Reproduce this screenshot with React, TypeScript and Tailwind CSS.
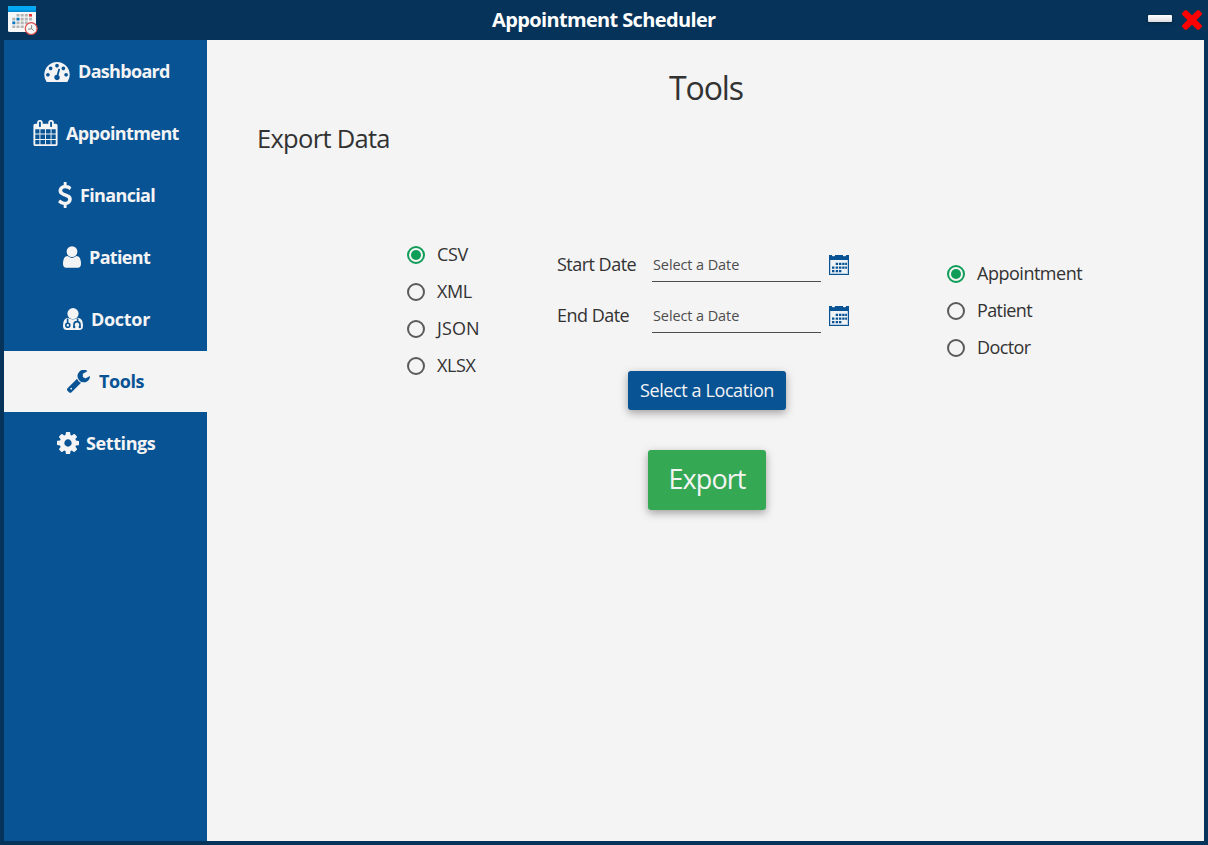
import React from 'react';

const paths = {
  gauge:
    'M384 1152q0-53-37.5-90.5t-90.5-37.5-90.5 37.5-37.5 90.5 37.5 90.5 90.5 37.5 90.5-37.5 37.5-90.5zm192-448q0-53-37.5-90.5t-90.5-37.5-90.5 37.5-37.5 90.5 37.5 90.5 90.5 37.5 90.5-37.5 37.5-90.5zm428 481l101-382q6-26-7.5-48.5t-38.5-29.5-48 6.5-30 39.5l-101 382q-60 5-107 43.5t-63 98.5q-20 77 20 146t117 89 146-20 89-117q16-60-6-117t-72-91zm660-33q0-53-37.5-90.5t-90.5-37.5-90.5 37.5-37.5 90.5 37.5 90.5 90.5 37.5 90.5-37.5 37.5-90.5zm-640-640q0-53-37.5-90.5t-90.5-37.5-90.5 37.5-37.5 90.5 37.5 90.5 90.5 37.5 90.5-37.5 37.5-90.5zm448 192q0-53-37.5-90.5t-90.5-37.5-90.5 37.5-37.5 90.5 37.5 90.5 90.5 37.5 90.5-37.5 37.5-90.5zm320 448q0 261-141 483-19 29-54 29h-1402q-35 0-54-29-141-221-141-483 0-182 71-348t191-286 286-191 348-71 348 71 286 191 191 286 71 348z',
  calendar:
    'M192 1664h288v-288h-288v288zm352 0h320v-288h-320v288zm-352-352h288v-320h-288v320zm352 0h320v-320h-320v320zm-352-384h288v-288h-288v288zm736 736h320v-288h-320v288zm-384-736h320v-288h-320v288zm768 736h288v-288h-288v288zm-384-352h320v-320h-320v320zm-352-864v-288q0-13-9.5-22.5t-22.5-9.5h-64q-13 0-22.5 9.5t-9.5 22.5v288q0 13 9.5 22.5t22.5 9.5h64q13 0 22.5-9.5t9.5-22.5zm736 864h288v-320h-288v320zm-384-384h320v-288h-320v288zm384 0h288v-288h-288v288zm32-480v-288q0-13-9.5-22.5t-22.5-9.5h-64q-13 0-22.5 9.5t-9.5 22.5v288q0 13 9.5 22.5t22.5 9.5h64q13 0 22.5-9.5t9.5-22.5zm384-64v1280q0 52-38 90t-90 38h-1408q-52 0-90-38t-38-90v-1280q0-52 38-90t90-38h128v-96q0-66 47-113t113-47h64q66 0 113 47t47 113v96h384v-96q0-66 47-113t113-47h64q66 0 113 47t47 113v96h128q52 0 90 38t38 90z',
  dollar:
    'M1362 1185q0 153-99.5 263.5t-258.5 136.5v175q0 14-9 23t-23 9h-135q-13 0-22.5-9.5t-9.5-22.5v-175q-66-9-127.5-31t-101.5-44.5-74-48-46.5-37.5-17.5-18q-17-21-2-41l103-135q7-10 23-12 15-2 24 9l2 2q113 99 243 125 37 8 74 8 81 0 142.5-43t61.5-122q0-28-15-53t-33.5-42-58.5-37.5-66-32-80-32.5q-39-16-61.5-25t-61.5-26.5-62.5-31-56.5-35.5-53.5-42.5-43.5-49-35.5-58-21-66.5-8.5-78q0-138 98-242t255-134v-180q0-13 9.5-22.5t22.5-9.5h135q14 0 23 9t9 23v176q57 6 110.5 23t87 33.5 63.5 37.5 39 29 15 14q17 18 5 38l-81 146q-8 15-23 16-14 3-27-7-3-3-14.5-12t-39-26.5-58.5-32-74.5-26-85.5-11.5q-95 0-155 43t-60 111q0 26 8.5 48t29.5 41.5 39.5 33 56 31 60.5 27 70 27.5q53 20 81 31.5t76 35 75.5 42.5 62 50 53 63.5 31.5 76.5 13 94z',
  user:
    'M1536 1399q0 109-62.5 187t-150.5 78h-854q-88 0-150.5-78t-62.5-187q0-85 8.5-160.5t31.5-152 58.5-131 94-89 134.5-34.5q131 128 313 128t313-128q76 0 134.5 34.5t94 89 58.5 131 31.5 152 8.5 160.5zm-256-887q0 159-112.5 271.5t-271.5 112.5-271.5-112.5-112.5-271.5 112.5-271.5 271.5-112.5 271.5 112.5 112.5 271.5z',
  wrench:
    'M448 1472q0-26-19-45t-45-19-45 19-19 45 19 45 45 19 45-19 19-45zm644-420l-682 682q-37 37-90 37-52 0-91-37l-106-108q-38-36-38-90 0-53 38-91l681-681q39 98 114.5 173.5t173.5 114.5zm634-435q0 39-23 106-47 134-164.5 217.5t-258.5 83.5q-185 0-316.5-131.5t-131.5-316.5 131.5-316.5 316.5-131.5q58 0 121.5 16.5t107.5 46.5q16 11 16 28t-16 28l-293 169v224l193 107q5-3 79-48.5t135.5-81 70.5-35.5q15 0 23.5 10t8.5 25z',
  cog:
    'M1152 896q0-106-75-181t-181-75-181 75-75 181 75 181 181 75 181-75 75-181zm512-109v222q0 12-8 23t-20 13l-185 28q-19 54-39 91 35 50 107 138 10 12 10 25t-9 23q-27 37-99 108t-94 71q-12 0-26-9l-138-108q-44 23-91 38-16 136-29 186-7 28-36 28h-222q-14 0-24.5-8.5t-11.5-21.5l-28-184q-49-16-90-37l-141 107q-10 9-25 9-14 0-25-11-126-114-165-168-7-10-7-23 0-12 8-23 15-21 51-66.5t54-70.5q-27-50-41-99l-183-27q-13-2-21-12.5t-8-23.5v-222q0-12 8-23t19-13l186-28q14-46 39-92-40-57-107-138-10-12-10-24 0-10 9-23 26-36 98.5-107.5t94.5-71.5q13 0 26 10l138 107q44-23 91-38 16-136 29-186 7-28 36-28h222q14 0 24.5 8.5t11.5 21.5l28 184q49 16 90 37l142-107q9-9 24-9 13 0 25 10 129 119 165 170 7 8 7 22 0 12-8 23-15 21-51 66.5t-54 70.5q26 50 41 98l183 28q13 2 21 12.5t8 23.5z',
  times:
    'M1490 1322q0 40-28 68l-136 136q-28 28-68 28t-68-28l-294-294-294 294q-28 28-68 28t-68-28l-136-136q-28-28-28-68t28-68l294-294-294-294q-28-28-28-68t28-68l136-136q28-28 68-28t68 28l294 294 294-294q28-28 68-28t68 28l136 136q28 28 28 68t-28 68l-294 294 294 294q28 28 28 68z',
};

function DoctorIcon() {
  return (
    <svg viewBox="0 0 20 22" className="-mt-px h-[22px] w-[20px]">
      <circle cx="10" cy="5.6" r="5.6" fill="#f4f4f4" />
      <path d="M5 9.8q5 3.6 10 0q5 .8 5 7.6q0 4.6-3.8 4.6H3.8Q0 22 0 17.4Q0 10.6 5 9.8z" fill="#f4f4f4" />
      <path d="M4.6 10.4v5M14.6 10.4v3M11 18.8v-2.4q0-2.8 3-2.8t3 2.8v2.4" fill="none" stroke="#085394" strokeWidth="1.6" />
      <circle cx="4.8" cy="17.2" r="2" fill="#f4f4f4" stroke="#085394" strokeWidth="1.6" />
      <circle cx="11.2" cy="19" r="1.2" fill="#085394" />
      <circle cx="16.8" cy="19" r="1.2" fill="#085394" />
    </svg>
  );
}

function AppLogo() {
  return (
    <svg viewBox="0 0 32 32" className="h-8 w-8">
      <rect x="1" y="1" width="28" height="26" rx="1.5" fill="#f7f7f7" />
      <path d="M1 7V2.5Q1 1 2.5 1h25Q29 1 29 2.5V7z" fill="#03a9f4" />
      <path d="M1 5.4h28V7H1z" fill="#0288d1" />
      <path
        d="M9.5 9h3v2.6h-3zM13.7 9h3v2.6h-3zM17.8 9h3v2.6h-3zM5.3 12.8h3v2.6h-3zM13.7 12.8h3v2.6h-3zM17.8 12.8h3v2.6h-3zM22 12.8h3v2.6h-3zM9.5 16.6h3v2.6h-3zM13.7 16.6h3v2.6h-3zM17.8 16.6h3v2.6h-3zM5.3 20.4h3V23h-3zM9.5 20.4h3V23h-3zM13.7 20.4h3V23h-3z"
        fill="#b4b4b4"
      />
      <path d="M22 9h3v2.6h-3z" fill="#e53935" />
      <path d="M9.5 12.8h3v2.6h-3zM5.3 16.6h3v2.6h-3z" fill="#0277bd" />
      <circle cx="24.2" cy="23.6" r="5.9" fill="#f5f5f5" stroke="#e04848" strokeWidth="1.2" />
      <path d="M24.6 20.2v3.5l2 2M24.6 23.7l-3.6.6" fill="none" stroke="#777" strokeWidth="0.9" />
    </svg>
  );
}

function DateIcon() {
  return (
    <svg viewBox="0 0 20 20" className="h-5 w-5">
      <path d="M0 0h20v20H0z" fill="#085394" />
      <path d="M1 5h18v14H1z" fill="#bccfe0" />
      <path d="M2 5h16v13H2z" fill="#f0f3f6" />
      <path d="M3 0h3v.7q-1.5 1-3 0zM14 0h3v.7q-1.5 1-3 0z" fill="#f4f4f4" />
      <path
        d="M6.7 7.7h2.4V10H6.7zM10 7.7h2.4V10H10zM13.2 7.7h2.4V10h-2.4zM16.2 7.7h1.8V10h-1.8zM3 11.4h2.4v2.3H3zM6.7 11.4h2.4v2.3H6.7zM10 11.4h2.4v2.3H10zM13.2 11.4h2.4v2.3h-2.4zM16.2 11.4h1.8v2.3h-1.8zM3 15h2.4v2.3H3zM6.7 15h2.4v2.3H6.7zM10 15h2.4v2.3H10z"
        fill="#085394"
      />
    </svg>
  );
}

const nav = [
  { label: 'Dashboard', pad: 'pl-[40px]', icon: <svg viewBox="0 256 1792 1408" className="h-5 w-[26px]" fill="currentColor"><path d={paths.gauge} /></svg>, gap: 'ml-[8px]', track: 'tracking-[-0.68px]' },
  { label: 'Appointment', pad: 'pl-[29px]', icon: <svg viewBox="64 0 1664 1792" className="-mt-px h-[26px] w-[25px]" fill="currentColor"><path d={paths.calendar} /></svg>, gap: 'ml-[8px]', track: 'tracking-[-0.6px]' },
  { label: 'Financial', pad: 'pl-[54px]', icon: <svg viewBox="420 0 950 1792" className="-mt-px h-[26px] w-[14px]" fill="currentColor"><path d={paths.dollar} /></svg>, gap: 'ml-[8px]', track: 'tracking-[-0.65px]' },
  { label: 'Patient', pad: 'pl-[59px]', icon: <svg viewBox="256 128 1280 1536" className="-mt-px h-[22px] w-[18px]" fill="currentColor"><path d={paths.user} /></svg>, gap: 'ml-[8px]', track: 'tracking-[-0.67px]' },
  { label: 'Doctor', pad: 'pl-[59px]', icon: <DoctorIcon />, gap: 'ml-[8px]', track: 'tracking-[-0.3px]' },
  { label: 'Tools', pad: 'pl-[63px]', icon: <svg viewBox="85 152 1641 1620" className="h-[23px] w-[23px]" fill="currentColor"><path d={paths.wrench} /></svg>, gap: 'ml-[9px]', track: 'tracking-[-0.4px]', active: true },
  { label: 'Settings', pad: 'pl-[53px]', icon: <svg viewBox="128 128 1536 1536" className="-mt-px h-[22px] w-[22px]" fill="currentColor"><path d={paths.cog} /></svg>, gap: 'ml-[7px]', track: 'tracking-[-0.4px]' },
];

function Radio({ label, track, checked = false }: { label: string; track: string; checked?: boolean }) {
  return (
    <div className="flex h-[37px] items-center">
      {checked ? (
        <span className="flex h-[18px] w-[18px] shrink-0 items-center justify-center rounded-full border-2 border-[#0f9d58]">
          <span className="h-[10px] w-[10px] rounded-full bg-[#0f9d58]" />
        </span>
      ) : (
        <span className="h-[18px] w-[18px] shrink-0 rounded-full border-2 border-[#5a5a5a]" />
      )}
      <span className={`ml-3 whitespace-nowrap pb-0.5 text-[18px] leading-6 ${track}`}>{label}</span>
    </div>
  );
}

function DateRow({ label }: { label: string }) {
  return (
    <div className="flex h-[51px] items-start">
      <span className="w-[95px] whitespace-nowrap pt-1 text-[18px] leading-6 tracking-[-0.52px]">{label}</span>
      <div className="h-[34px] w-[169px] border-b border-[#4d4d4d] pl-px pt-[6px] text-[14.5px] leading-[22px] tracking-[-0.1px] text-[#4d4d4d]">
        Select a Date
      </div>
      <div className="ml-2 mt-[7px]">
        <DateIcon />
      </div>
    </div>
  );
}

export default function App() {
  return (
    <div className="flex h-[845px] w-[1208px] flex-col overflow-hidden bg-[#053359] px-1 pb-1 font-['Open_Sans',sans-serif] text-[#323232]">
      <header className="flex h-10 shrink-0 items-center">
        <div className="ml-[3px] w-[485px] pt-px">
          <AppLogo />
        </div>
        <h1 className="w-[656px] whitespace-nowrap text-[20px] font-bold leading-10 tracking-[-0.64px] text-white">
          Appointment Scheduler
        </h1>
        <div className="mt-[-4px] h-[7px] w-6 shrink-0 rounded-[1px] bg-linear-to-b from-white to-[#dedee2] shadow-[0_1px_3px_rgba(0,0,0,0.35)]" />
        <svg viewBox="302 366 1188 1188" className="ml-[10px] h-5 w-5 shrink-0" fill="#ff0000">
          <path d={paths.times} />
        </svg>
      </header>

      <div className="flex flex-1">
        <nav className="flex w-[203px] shrink-0 flex-col bg-[#085394] pt-px">
          {nav.map((n) => (
            <div key={n.label} className="h-[62px] pb-px">
              <div className={`flex h-[61px] items-center ${n.pad} ${n.active ? 'bg-[#f4f4f4] text-[#085394]' : 'text-[#f4f4f4]'}`}>
                <span className="flex shrink-0 items-center">{n.icon}</span>
                <span className={`whitespace-nowrap pb-0.5 text-[18px] font-bold leading-6 ${n.gap} ${n.track}`}>{n.label}</span>
              </div>
            </div>
          ))}
        </nav>

        <main className="flex flex-1 flex-col bg-[#f4f4f4]">
          <h2 className="mt-[26px] h-11 pl-[462px] text-[32px] leading-[44px] tracking-[-1.1px]">Tools</h2>
          <h3 className="mt-[10px] h-9 pl-[50px] text-[25.5px] leading-9 tracking-[-0.7px]">Export Data</h3>

          <div className="mt-[80px] flex pl-[200px]">
            <div className="w-[150px]">
              <Radio label="CSV" track="tracking-[-0.4px]" checked />
              <Radio label="XML" track="tracking-[-0.4px]" />
              <Radio label="JSON" track="tracking-[0.1px]" />
              <Radio label="XLSX" track="tracking-[-0.4px]" />
            </div>
            <div className="w-[390px] pt-3">
              <DateRow label="Start Date" />
              <DateRow label="End Date" />
              <div className="mt-[21px] flex w-[300px] flex-col items-center">
                <button className="h-[39px] w-[158px] whitespace-nowrap rounded-[3px] bg-[#085394] pb-0.5 text-[18px] leading-6 tracking-[-0.4px] text-[#f4f4f4] shadow-[0_3px_8px_rgba(0,0,0,0.35)]">
                  Select a Location
                </button>
                <button className="mt-10 h-[60px] w-[118px] rounded-[3px] bg-[#34a853] pb-0.5 text-[27px] leading-9 tracking-[-0.9px] text-[#f4f4f4] shadow-[0_3px_8px_rgba(0,0,0,0.35)]">
                  Export
                </button>
              </div>
            </div>
            <div className="pt-[19px]">
              <Radio label="Appointment" track="tracking-[-0.48px]" checked />
              <Radio label="Patient" track="tracking-[-0.62px]" />
              <Radio label="Doctor" track="tracking-[-0.6px]" />
            </div>
          </div>
        </main>
      </div>
    </div>
  );
}
